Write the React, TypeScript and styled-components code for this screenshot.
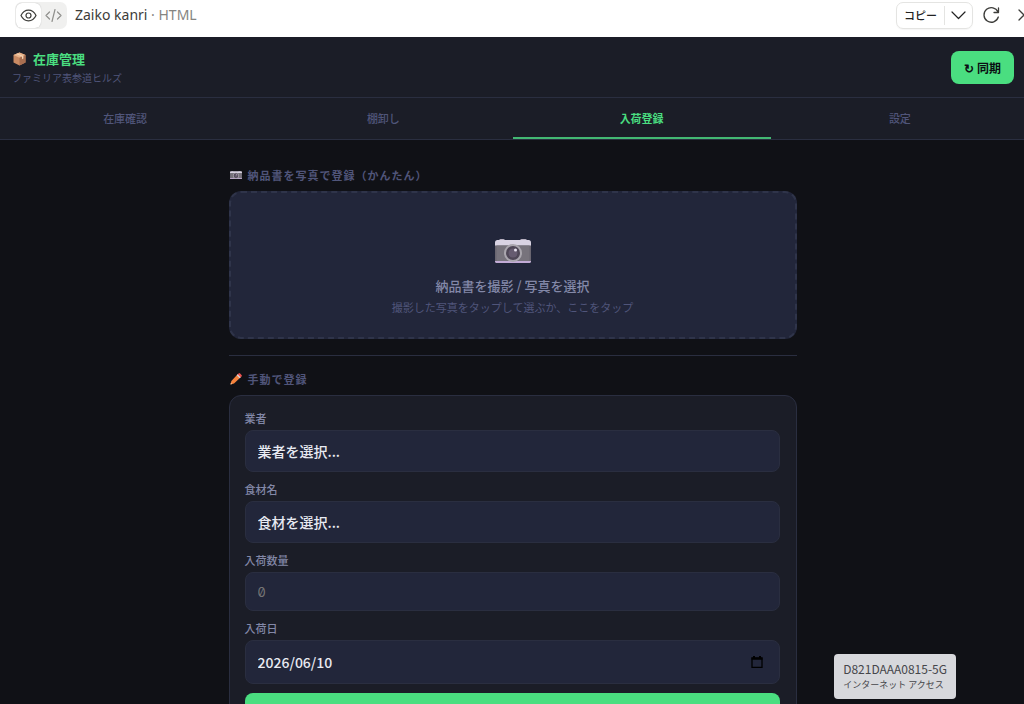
import React from "react";
import styled, { createGlobalStyle, css } from "styled-components";

const color = {
  page: "#101116",
  surface: "#1b1d27",
  field: "#22263a",
  border: "#2a2e40",
  dash: "#2f344a",
  faint: "#50557a",
  label: "#8388a8",
  text: "#e8eaf2",
  green: "#4ade80",
};

const GlobalStyle = createGlobalStyle`
  * { box-sizing: border-box; }
  body {
    margin: 0;
    background: ${color.page};
    font-family: "Noto Sans CJK JP", sans-serif;
  }
  button, input, select { font-family: inherit; margin: 0; }
  h1, h2, p { margin: 0; font-weight: 400; }
`;

const Shell = styled.div`
  display: flex;
  flex-direction: column;
  height: 100vh;
  overflow: hidden;
`;

/* ---------- viewer toolbar ---------- */

const Toolbar = styled.div`
  display: flex;
  flex: none;
  align-items: center;
  justify-content: space-between;
  height: 37px;
  padding: 0 0 7px 15px;
  background: #fff;
  color: #3d3d3a;
`;

const ToolbarGroup = styled.div<{ $bleed?: boolean }>`
  display: flex;
  align-items: center;
  gap: 8px;
  ${(p) => p.$bleed && css`margin-right: -15px;`}
`;

const Toggle = styled.div`
  display: flex;
  height: 27px;
  padding: 1px;
  border-radius: 7px;
  background: #f0f0ef;
`;

const ToggleButton = styled.button<{ $on?: boolean }>`
  display: grid;
  place-items: center;
  width: 25px;
  padding: 0;
  border: 0;
  border-radius: 6px;
  background: ${(p) => (p.$on ? "#fff" : "transparent")};
  color: ${(p) => (p.$on ? "#3d3d3a" : "#8f8f8c")};
  box-shadow: ${(p) => (p.$on ? "0 0 1px #aaa" : "none")};
`;

const FileName = styled.div`
  font: 14px/20px "Noto Sans", sans-serif;
  color: #3d3d3a;
  span { color: #858582; }
`;

const SplitButton = styled.div`
  display: flex;
  align-items: center;
  height: 27px;
  border: 1px solid #e4e4e2;
  border-radius: 7px;
  box-shadow: 0 1px 1px #0000000a;
`;

const SplitPart = styled.button<{ $divided?: boolean }>`
  display: grid;
  place-items: center;
  height: 19px;
  padding: 0 ${(p) => (p.$divided ? "6px" : "7px")};
  border: 0;
  border-left: ${(p) => (p.$divided ? "1px solid #e4e4e2" : "0")};
  background: none;
  color: #222;
  font-size: 11px;
  font-weight: 500;
  line-height: 18px;
`;

const IconButton = styled.button`
  display: grid;
  place-items: center;
  width: 20px;
  height: 20px;
  padding: 0;
  border: 0;
  background: none;
  color: #3d3d3a;
`;

const CloseButton = styled(IconButton)`
  width: 30px;
`;

/* ---------- previewed app ---------- */

const Preview = styled.div`
  flex: 1;
  min-height: 0;
  margin: 0 -5px 0 -4px;
`;

const Header = styled.header`
  display: flex;
  align-items: center;
  justify-content: space-between;
  height: 61px;
  padding: 0 15px 0 16px;
  background: ${color.surface};
  border-bottom: 1px solid ${color.border};
`;

const BrandBlock = styled.div`
  padding-top: 2px;
`;

const Brand = styled.h1`
  display: flex;
  align-items: center;
  gap: 7px;
  color: ${color.green};
  font-size: 13px;
  font-weight: 700;
  line-height: 20px;
  svg { margin-left: 1px; }
`;

const Store = styled.p`
  color: ${color.faint};
  font-size: 10px;
  line-height: 18px;
`;

const SyncButton = styled.button`
  height: 33px;
  padding: 0 13px;
  border: 0;
  border-radius: 8px;
  background: ${color.green};
  color: #0b0d12;
  font-size: 12px;
  font-weight: 700;
`;

const Tabs = styled.nav`
  display: grid;
  grid-template-columns: repeat(4, 1fr);
  height: 42px;
  background: ${color.surface};
  border-bottom: 1px solid ${color.border};
`;

const Tab = styled.button<{ $active?: boolean }>`
  padding: 0;
  border: 0;
  border-bottom: 2px solid ${(p) => (p.$active ? "#43b873" : "transparent")};
  background: none;
  color: ${(p) => (p.$active ? color.green : color.faint)};
  font-size: 11px;
  font-weight: ${(p) => (p.$active ? 700 : 500)};
`;

const Main = styled.main`
  max-width: 600px;
  margin: 0 auto;
  padding: 25px 16px 16px;
`;

const SectionTitle = styled.h2`
  display: flex;
  align-items: center;
  gap: 6px;
  margin-bottom: 6px;
  color: ${color.faint};
  font-size: 11px;
  font-weight: 700;
  line-height: 20px;
  letter-spacing: 1px;
  svg { margin-left: 1px; }
`;

const DropZone = styled.button`
  display: flex;
  flex-direction: column;
  align-items: center;
  justify-content: flex-end;
  width: 100%;
  height: 148px;
  padding: 0 16px 20px;
  border: 2px dashed ${color.dash};
  border-radius: 12px;
  background: ${color.field};
`;

const DropTitle = styled.span`
  margin-top: 12px;
  color: ${color.label};
  font-size: 13px;
  font-weight: 500;
  line-height: 22px;
`;

const DropHint = styled.span`
  color: ${color.faint};
  font-size: 11px;
  line-height: 20px;
`;

const Divider = styled.hr`
  height: 1px;
  margin: 16px 0 13px;
  border: 0;
  background: ${color.border};
`;

const Card = styled.form`
  padding: 14px 16px 14px 15px;
  border: 1px solid ${color.border};
  border-radius: 12px;
  background: ${color.surface};
`;

const Field = styled.div`
  display: flex;
  flex-direction: column;
  gap: 3px;
  margin-bottom: 9px;
`;

const Label = styled.label`
  color: ${color.label};
  font-size: 11px;
  font-weight: 500;
  line-height: 17px;
`;

const control = css`
  width: 100%;
  padding: 0 12px;
  border: 1px solid ${color.border};
  border-radius: 8px;
  outline: 0;
  background: ${color.field};
  color: ${color.text};
  font-size: 14px;
  font-weight: 500;
`;

const Select = styled.select`
  ${control}
  height: 42px;
  appearance: none;
`;

const NumberInput = styled.input`
  ${control}
  height: 39px;
  font-family: Inter, sans-serif;
  font-size: 13px;
  font-weight: 400;
  font-feature-settings: "zero";
  &::placeholder { color: #757575; }
`;

const DateBox = styled.div`
  ${control}
  display: flex;
  align-items: center;
  justify-content: space-between;
  height: 44px;
`;

const DateInput = styled.input`
  flex: 1;
  min-width: 0;
  padding: 0;
  border: 0;
  outline: 0;
  background: none;
  color: inherit;
  font-size: 14px;
  font-weight: 500;
`;

const CalendarButton = styled(IconButton)`
  color: #000;
`;

const Submit = styled.button`
  width: 100%;
  height: 44px;
  border: 0;
  border-radius: 8px;
  background: ${color.green};
  color: #0b0d12;
  font-size: 14px;
  font-weight: 700;
`;

const NetworkTip = styled.div`
  position: fixed;
  right: 68px;
  bottom: 5px;
  padding: 7px 9px 6px;
  border-radius: 4px;
  background: #d7d8dc;
  color: #45464a;
`;

const TipLine = styled.div<{ $kana?: boolean }>`
  font-size: ${(p) => (p.$kana ? "9px" : "12px")};
  line-height: 16px;
`;

/* ---------- drawings ---------- */

const Eye = () => (
  <svg width="17" height="17" viewBox="0 0 17 17" fill="none" stroke="currentColor" strokeWidth="1.2">
    <path d="M1 8.5C2.6 5.2 5.2 3.2 8.5 3.2s5.9 2 7.5 5.3c-1.6 3.3-4.2 5.3-7.5 5.3S2.600 11.800 1 8.500Z" />
    <circle cx="8.500" cy="8.500" r="2.500" />
  </svg>
);

const Code = () => (
  <svg width="17" height="15" viewBox="0 0 17 15" fill="none" stroke="currentColor" strokeWidth="1.2" strokeLinecap="round" strokeLinejoin="round">
    <path d="M4.500 4 1 7.500 4.500 11M12.500 4 16 7.500 12.500 11M10 1.500 7 13.500" />
  </svg>
);

const Chevron = () => (
  <svg width="15" height="9" viewBox="0 0 15 9" fill="none" stroke="currentColor" strokeWidth="1.2" strokeLinecap="round" strokeLinejoin="round">
    <path d="m1 1 6.500 6.500L14 1" />
  </svg>
);

const Refresh = () => (
  <svg width="18" height="18" viewBox="0 0 18 18" fill="none" stroke="currentColor" strokeWidth="1.3" strokeLinecap="round" strokeLinejoin="round">
    <path d="M16.500 2v4.500H12M16 6A7.300 7.300 0 1 0 16.300 11" />
  </svg>
);

const Close = () => (
  <svg width="12" height="12" viewBox="0 0 12 12" fill="none" stroke="currentColor" strokeWidth="1.3" strokeLinecap="round">
    <path d="m1 1 10 10M11 1 1 11" />
  </svg>
);

const Package = () => (
  <svg width="13" height="14" viewBox="0 0 13 14">
    <path d="M6.500.5 12.500 3v7.500l-6 3-6-3V3Z" fill="#c98a63" />
    <path d="M6.500.5 12.500 3l-6 2.700L.5 3Z" fill="#e8b48c" />
    <path d="M6.500 5.700 12.500 3v7.500l-6 3Z" fill="#a86e50" />
    <path d="m3 2 6 2.600v2.600l1.400-.8V4L4.500 1.400Z" fill="#f3d3b3" />
  </svg>
);

const Camera = ({ width }: { width: number }) => (
  <svg width={width} height={Math.round((width * 2) / 3)} viewBox="0 0 36 24">
    <path d="M4 1.500Q4 0 5.500 0h3Q10 0 10 1.500ZM25 1.500Q25 0 26.500 0h4Q32 0 32 1.500Z" fill="#b9b2c2" />
    <rect y="1" width="36" height="23" rx="2.500" fill="#d9d3e3" />
    <rect y="6.500" width="36" height="15.500" fill="#6a6670" />
    <rect x="1.500" y="6.500" width="33" height="15.500" fill="#77737c" />
    <path d="M0 22h36q0 2-2 2H2q-2 0-2-2Z" fill="#c3abd6" />
    <circle cx="18" cy="14" r="9" fill="#aaa6ae" />
    <circle cx="18" cy="14" r="7" fill="#4f4757" />
    <circle cx="18" cy="14" r="4.500" fill="#665b70" />
    <circle cx="20.500" cy="11" r="1.500" fill="#e8e2f0" />
  </svg>
);

const Pencil = () => (
  <svg width="12" height="12" viewBox="0 0 12 12">
    <path d="m7.700 1.300 3 3L4 10.500l-3.500 1 .9-3.600Z" fill="#f5823c" />
    <path d="m.9 9.700 1.300 1.300-1.700.5Z" fill="#f3c9a0" />
    <path d="m6.700 2.200 3 3 1.300-1.300-3-3Z" fill="#d8d4dc" />
    <path d="m7.700 1.200.9-.8q.8-.6 1.500.1l1.400 1.400q.6.700 0 1.500l-.8.900Z" fill="#ef5350" />
  </svg>
);

const Calendar = () => (
  <svg width="12" height="12" viewBox="0 0 12 12" fill="none" stroke="currentColor">
    <path d="M1 2h10v9.300H1Z" strokeWidth="1.300" />
    <path d="M.5 2.700h11M3 0v2M9 0v2" strokeWidth="2" />
  </svg>
);

const tabs = ["在庫確認", "棚卸し", "入荷登録", "設定"];

export default function App() {
  return (
    <Shell>
      <GlobalStyle />
      <Toolbar>
        <ToolbarGroup>
          <Toggle>
            <ToggleButton $on aria-label="プレビュー"><Eye /></ToggleButton>
            <ToggleButton aria-label="コード"><Code /></ToggleButton>
          </Toggle>
          <FileName>Zaiko kanri <span>· HTML</span></FileName>
        </ToolbarGroup>
        <ToolbarGroup $bleed>
          <SplitButton>
            <SplitPart>コピー</SplitPart>
            <SplitPart $divided aria-label="その他"><Chevron /></SplitPart>
          </SplitButton>
          <IconButton aria-label="再読み込み"><Refresh /></IconButton>
          <CloseButton aria-label="閉じる"><Close /></CloseButton>
        </ToolbarGroup>
      </Toolbar>

      <Preview>
        <Header>
          <BrandBlock>
            <Brand><Package />在庫管理</Brand>
            <Store>ファミリア表参道ヒルズ</Store>
          </BrandBlock>
          <SyncButton>↻ 同期</SyncButton>
        </Header>
        <Tabs>
          {tabs.map((name) => (
            <Tab key={name} $active={name === "入荷登録"}>{name}</Tab>
          ))}
        </Tabs>
        <Main>
          <SectionTitle><Camera width={12} />納品書を写真で登録（かんたん）</SectionTitle>
          <DropZone>
            <Camera width={36} />
            <DropTitle>納品書を撮影 / 写真を選択</DropTitle>
            <DropHint>撮影した写真をタップして選ぶか、ここをタップ</DropHint>
          </DropZone>
          <Divider />
          <SectionTitle><Pencil />手動で登録</SectionTitle>
          <Card>
            <Field>
              <Label htmlFor="vendor">業者</Label>
              <Select id="vendor"><option>業者を選択...</option></Select>
            </Field>
            <Field>
              <Label htmlFor="item">食材名</Label>
              <Select id="item"><option>食材を選択...</option></Select>
            </Field>
            <Field>
              <Label htmlFor="amount">入荷数量</Label>
              <NumberInput id="amount" inputMode="decimal" placeholder="0" />
            </Field>
            <Field>
              <Label htmlFor="date">入荷日</Label>
              <DateBox>
                <DateInput id="date" defaultValue="2026/06/10" />
                <CalendarButton type="button" aria-label="日付を選択"><Calendar /></CalendarButton>
              </DateBox>
            </Field>
            <Submit type="button" aria-label="登録" />
          </Card>
        </Main>
      </Preview>

      <NetworkTip role="tooltip">
        <TipLine>D821DAAA0815-5G</TipLine>
        <TipLine $kana>インターネット アクセス</TipLine>
      </NetworkTip>
    </Shell>
  );
}
